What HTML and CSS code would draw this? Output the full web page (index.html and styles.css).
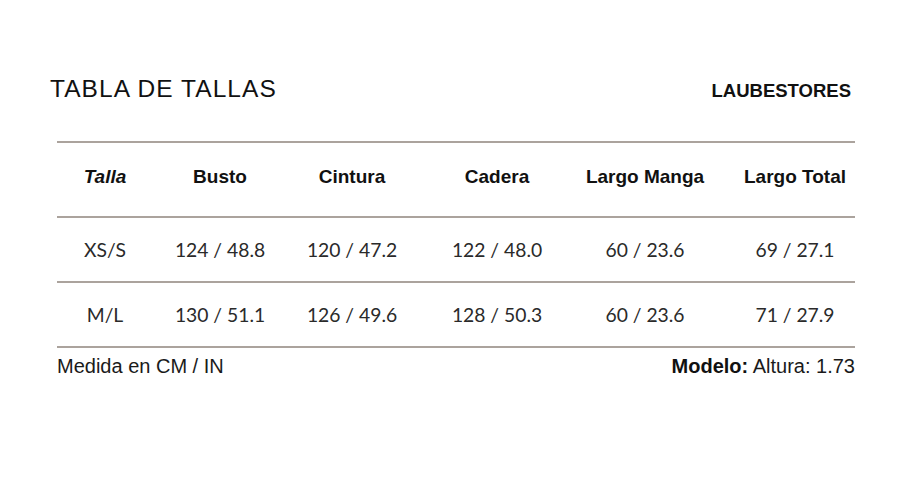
FILE: index.html
```html
<!DOCTYPE html>
<html lang="es">
<head>
<meta charset="utf-8">
<title>Tabla de tallas</title>
<link rel="stylesheet" href="styles.css">
</head>
<body>
<div class="page">
  <header class="top">
    <h1 class="title">TABLA DE TALLAS</h1>
    <div class="brand">LAUBESTORES</div>
  </header>
  <div class="table">
    <div class="row head">
      <div class="cell talla">Talla</div>
      <div class="cell">Busto</div>
      <div class="cell">Cintura</div>
      <div class="cell">Cadera</div>
      <div class="cell">Largo Manga</div>
      <div class="cell last">Largo Total</div>
    </div>
    <div class="row data">
      <div class="cell">XS/S</div>
      <div class="cell">124 / 48.8</div>
      <div class="cell">120 / 47.2</div>
      <div class="cell">122 / 48.0</div>
      <div class="cell">60 / 23.6</div>
      <div class="cell last">69 / 27.1</div>
    </div>
    <div class="row data">
      <div class="cell">M/L</div>
      <div class="cell">130 / 51.1</div>
      <div class="cell">126 / 49.6</div>
      <div class="cell">128 / 50.3</div>
      <div class="cell">60 / 23.6</div>
      <div class="cell last">71 / 27.9</div>
    </div>
  </div>
  <footer class="foot">
    <span>Medida en CM / IN</span>
    <span><b>Modelo:</b> Altura: 1.73</span>
  </footer>
</div>
</body>
</html>
```
FILE: styles.css
```css
html, body {
  margin: 0;
  padding: 0;
  background: #ffffff;
}
.page {
  width: 900px;
  height: 500px;
  font-family: "Liberation Sans", Arial, sans-serif;
  color: #111;
}
.top {
  display: flex;
  justify-content: space-between;
  align-items: baseline;
  padding: 74px 49px 0 50px;
}
.title {
  margin: 0;
  font-weight: normal;
  font-size: 24.5px;
  line-height: 30px;
  letter-spacing: 1.05px;
  color: #111;
}
.brand {
  font-weight: bold;
  font-size: 18.5px;
  color: #111;
}
.table {
  margin: 37px 45px 0 57px;
  border-top: 2px solid #aba39d;
}
.row {
  display: grid;
  grid-template-columns: 96px 134px 130px 160px 136px 142px;
  align-items: center;
  border-bottom: 2px solid #aba39d;
}
.cell {
  text-align: center;
  white-space: nowrap;
}
.cell.last {
  padding-left: 22px;
}
.head {
  height: 73px;
  box-sizing: content-box;
  font-weight: bold;
  font-size: 19px;
  color: #111;
}
.head .cell {
  padding-bottom: 5px;
}
.head .cell.talla {
  font-style: italic;
}
.data {
  height: 63px;
  font-family: Lato, "Liberation Sans", sans-serif;
  font-size: 19.3px;
  color: #2a2a2a;
}
.foot {
  display: flex;
  justify-content: space-between;
  align-items: baseline;
  margin: 7px 45px 0 57px;
  font-size: 20px;
  color: #1a1a1a;
}
.foot b {
  font-weight: bold;
  color: #111;
}
```
